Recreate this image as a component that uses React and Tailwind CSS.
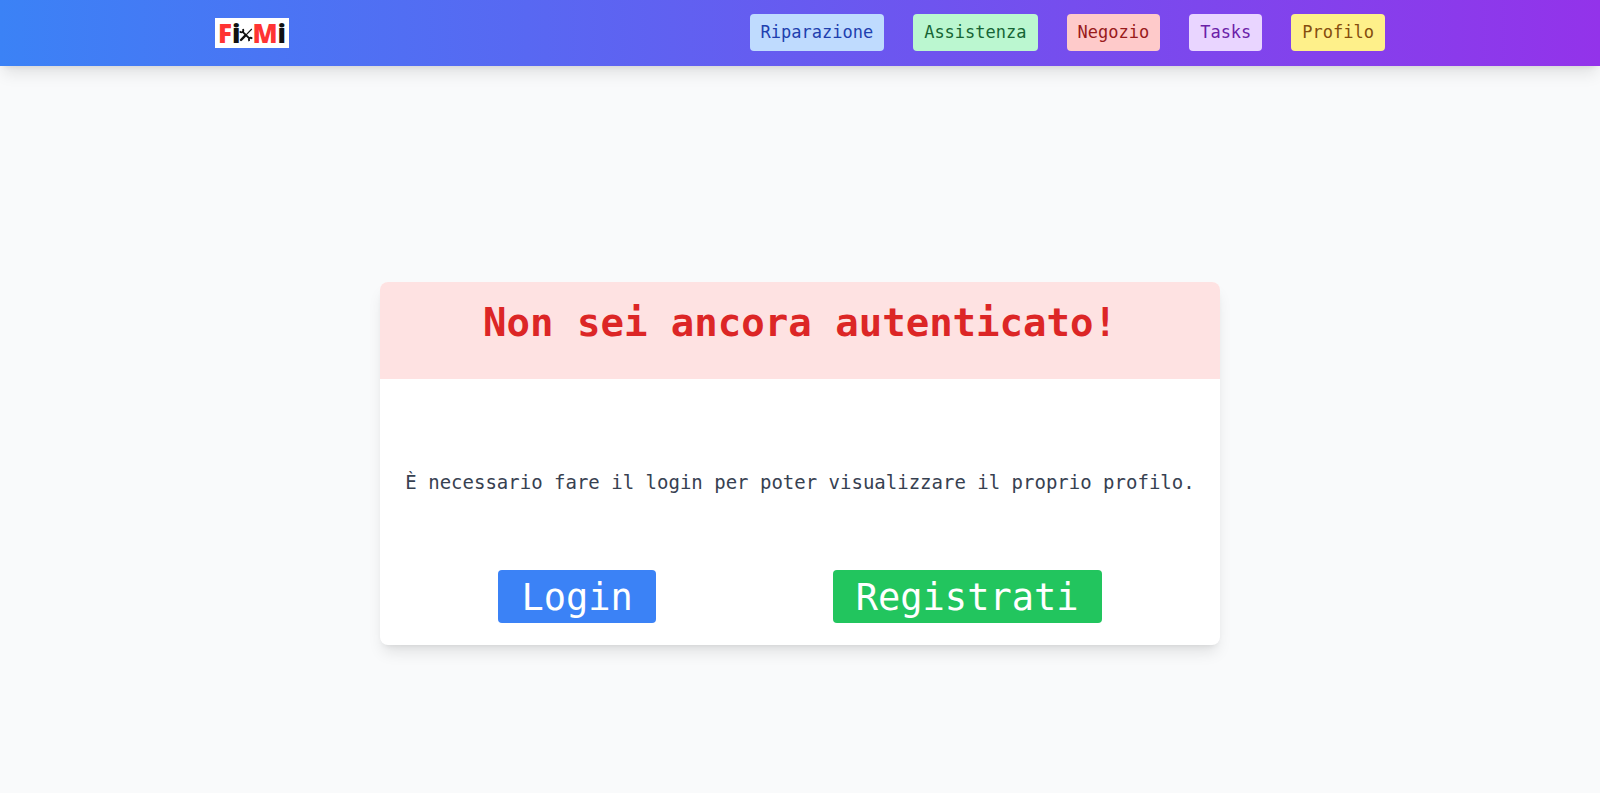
const navLinks = [
  { label: "Riparazione", className: "bg-[#bfdbfe] text-[#1e40af]" },
  { label: "Assistenza", className: "bg-[#bbf7d0] text-[#166534]" },
  { label: "Negozio", className: "bg-[#fecaca] text-[#991b1b]" },
  { label: "Tasks", className: "bg-[#e9d5ff] text-[#6b21a8]" },
  { label: "Profilo", className: "bg-[#fef08a] text-[#854d0e]" },
];

function CrossedTools() {
  return (
    <svg viewBox="0 0 14 14" className="-mx-px mt-1 h-[14px] w-[14px] shrink-0" fill="none" stroke="#111" aria-hidden="true">
      <path d="M3.4 3.6 L11 11" strokeWidth="1.8" />
      <path d="M0.8 3.4 C2.4 5.4 5.2 4 4 1" strokeWidth="1.8" />
      <path d="M13.2 10.6 C11.4 8.8 9 10.2 10.2 13.2" strokeWidth="1.8" />
      <path d="M12.8 1 L6.4 7.6" strokeWidth="1.1" />
      <path d="M6 7.8 L2 12" strokeWidth="2.4" strokeLinecap="round" />
    </svg>
  );
}

function Logo() {
  return (
    <a
      href="#"
      aria-label="FixMi"
      className="flex h-[30px] w-[74px] items-center justify-center bg-white font-['Open_Sans',sans-serif] text-[26px] leading-[30px] font-extrabold text-[#ff3333]"
    >
      <span>F</span>
      <span className="text-[#111]">i</span>
      <CrossedTools />
      <span>M</span>
      <span className="text-[#111]">i</span>
    </a>
  );
}

export default function App() {
  return (
    <div className="flex min-h-screen flex-col bg-[#f9fafb] font-['DejaVu_Sans_Mono','Liberation_Mono',monospace]">
      <header className="bg-linear-to-r/srgb from-[#3b82f6] to-[#9333ea] shadow-lg">
        <div className="mx-auto flex max-w-[1200px] items-center justify-between px-[15px] pt-[14px] pb-[15px]">
          <Logo />
          <nav className="flex gap-[29px]">
            {navLinks.map((link) => (
              <a
                key={link.label}
                href="#"
                className={`rounded px-[11px] text-[17px] leading-[37px] ${link.className}`}
              >
                {link.label}
              </a>
            ))}
          </nav>
        </div>
      </header>
      <main className="flex flex-1 items-center justify-center px-4 pt-[68px]">
        <section className="w-full max-w-[840px] overflow-hidden rounded-lg bg-white shadow-lg">
          <div className="bg-[#fee2e2] px-4 pt-[17px] pb-8">
            <h1 className="text-center text-[39px] leading-[48px] font-bold text-[#dc2626]">
              Non sei ancora autenticato!
            </h1>
          </div>
          <p className="px-4 pt-[89px] pb-[74px] text-center text-[19px] leading-7 text-[#374151]">
            È necessario fare il login per poter visualizzare il proprio profilo.
          </p>
          <div className="flex justify-around px-[30px] pb-[22px]">
            <button type="button" className="rounded bg-[#3b82f6] px-[23px] pt-[2px] text-[37px] leading-[51px] text-white">
              Login
            </button>
            <button type="button" className="rounded bg-[#22c55e] px-[23px] pt-[2px] text-[37px] leading-[51px] text-white">
              Registrati
            </button>
          </div>
        </section>
      </main>
    </div>
  );
}
